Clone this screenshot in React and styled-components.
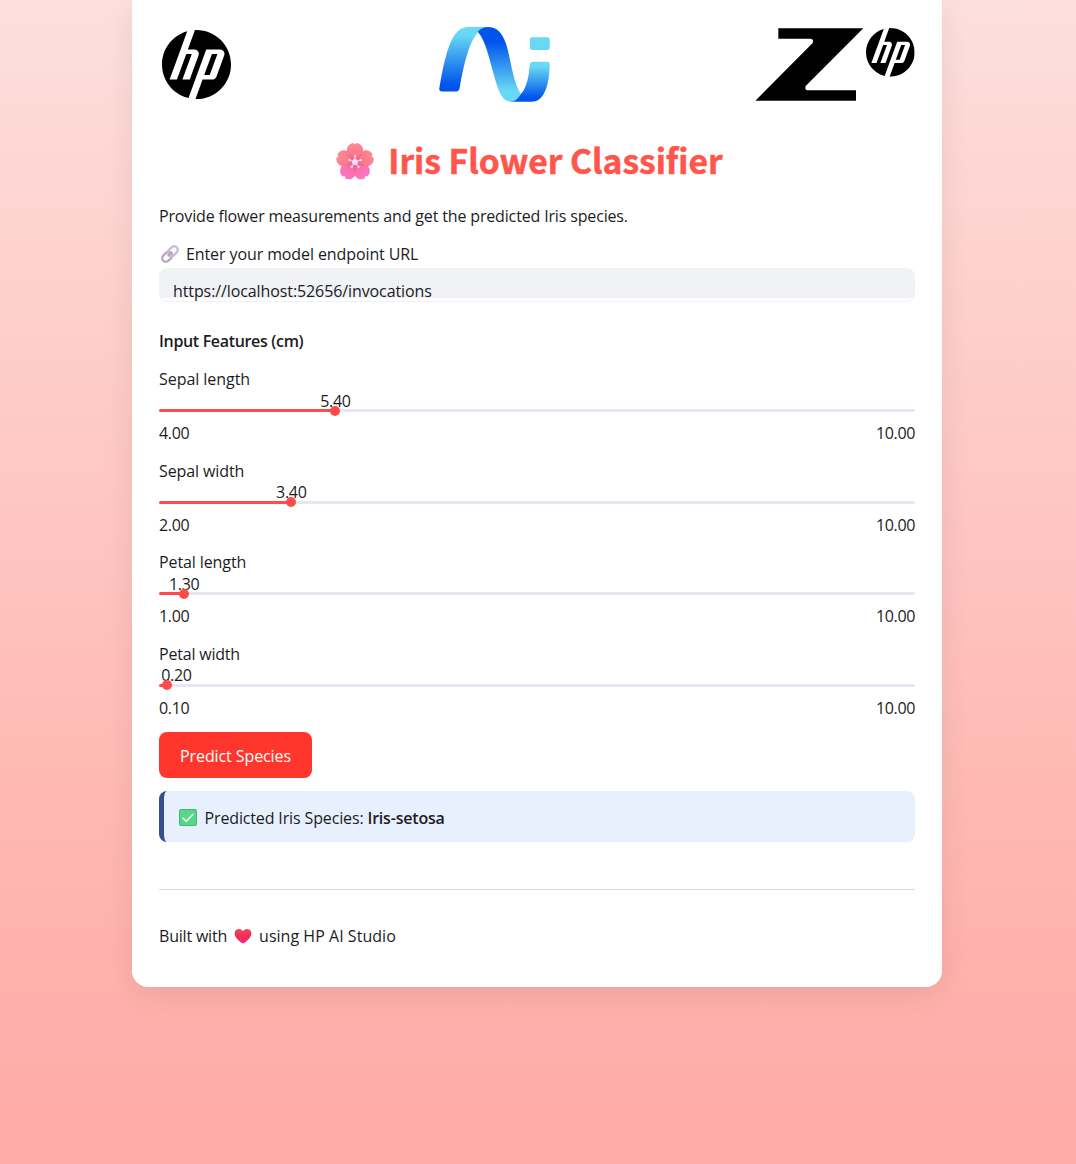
import React from "react";
import styled, { createGlobalStyle } from "styled-components";
import { SiHp } from "react-icons/si";

const GlobalStyle = createGlobalStyle`
  *, *::before, *::after { box-sizing: border-box; }
  html { height: 100%; }
  body {
    margin: 0;
    min-height: 1164px;
    background: linear-gradient(180deg, #fddfdc 0%, #fecdc9 31%, #ffb3ae 79%, #ffaaa5 100%);
    font-family: "Open Sans", "Noto Sans", sans-serif;
    font-size: 16px;
    line-height: 24px;
    color: #1c1c1f;
  }
`;

const Card = styled.main`
  width: 810px;
  height: 987px;
  margin: 0 0 0 132px;
  padding: 27px 27px 0;
  background: #fff;
  border-radius: 0 0 16px 16px;
  box-shadow: 0 8px 30px rgba(0, 0, 0, 0.08);
`;

const LogoRow = styled.header`
  display: flex;
  justify-content: space-between;
  align-items: center;
  height: 75px;
`;

const HpMark = styled.div`
  display: flex;
  width: 75px;
  height: 75px;
  padding: 3px;
  color: #000;
`;

const Title = styled.h1`
  display: flex;
  align-items: center;
  justify-content: center;
  gap: 14px;
  height: 52px;
  margin: 34px 15px 0 0;
  font-family: "Noto Sans CJK SC", "Open Sans", sans-serif;
  font-size: 33.6px;
  line-height: 48px;
  font-weight: 700;
  color: #ff554b;
  -webkit-text-stroke: 0.5px #ff554b;
  white-space: nowrap;

  span { padding-bottom: 4px; }
  svg { margin-bottom: 2px; }
`;

const Line = styled.p`
  display: flex;
  align-items: center;
  height: 24px;
  margin: ${(p) => p.$top || 0}px 0 0;
  letter-spacing: ${(p) => p.$track || 0}px;
  font-weight: ${(p) => (p.$bold ? 600 : 400)};
  white-space: pre;

  svg { flex: none; }
`;

const Field = styled.div`
  height: 34px;
  margin-top: 2px;
  border: 1px solid #f0f2f6;
  border-radius: 8px;
  background: linear-gradient(#f0f2f6 29px, #fff 29px);
  overflow: hidden;
`;

const Input = styled.input`
  display: block;
  width: 100%;
  height: 34px;
  padding: 9px 13px 0;
  border: 0;
  outline: 0;
  background: transparent;
  color: inherit;
  font: inherit;
  line-height: 24px;
  letter-spacing: -0.1px;
`;

const Sliders = styled.section`
  display: grid;
  gap: 13.6px;
  margin-top: 14px;
`;

const SliderBox = styled.div`
  display: flex;
  flex-direction: column;
  height: 78px;
`;

const Track = styled.div`
  position: relative;
  height: 3px;
  margin: 18px 0 9px;
  border-radius: 2px;
  background: linear-gradient(to right, #ff4b4b ${(p) => p.$at}%, #e5e8f0 ${(p) => p.$at}%);
`;

const Thumb = styled.span`
  position: absolute;
  top: -3.4px;
  left: ${(p) => p.$at}%;
  width: 10px;
  height: 10px;
  margin-left: -5px;
  border-radius: 50%;
  background: #ff4b4b;
`;

const Value = styled.span`
  position: absolute;
  bottom: -0.6px;
  left: ${(p) => p.$at}%;
  transform: translateX(-50%);
  letter-spacing: -0.3px;
`;

const Range = styled.div`
  display: flex;
  justify-content: space-between;
  letter-spacing: -0.35px;
`;

const Button = styled.button`
  display: block;
  width: 153px;
  height: 46px;
  margin-top: 12.2px;
  padding: 2px 0 0;
  border: 0;
  border-radius: 8px;
  background: #ff362b;
  color: #fff;
  font: inherit;
  letter-spacing: -0.1px;
`;

const Result = styled.div`
  display: flex;
  align-items: center;
  height: 51px;
  margin-top: 13px;
  padding: 3px 15px 0;
  border-left: 5px solid #344f8e;
  border-radius: 8px;
  background: #e8effd;
  white-space: pre;
  letter-spacing: -0.14px;

  svg { margin-right: 7.5px; }
  strong { font-weight: 600; letter-spacing: -0.2px; }
`;

const Rule = styled.hr`
  height: 1px;
  margin: 47px 0 0;
  border: 0;
  background: #d3dcea;
`;

const FooterText = styled.span`
  letter-spacing: ${(p) => p.$track}px;
`;

function AiLogo() {
  return (
    <svg width="112" height="75" viewBox="42 36 336 226">
      <defs>
        <linearGradient id="rise" x1="0" y1="0" x2="0" y2="1">
          <stop offset="0.12" stopColor="#68d8f5" />
          <stop offset="0.9" stopColor="#0054ec" />
        </linearGradient>
        <linearGradient id="fall" x1="0" y1="0" x2="0" y2="1">
          <stop offset="0.2" stopColor="#0054ec" />
          <stop offset="0.85" stopColor="#68d8f5" />
        </linearGradient>
      </defs>
      <path fill="url(#rise)" d="M42 222C52 160 66 92 88 60Q104 36 130 36H188L160 50C134 80 119 131 103 222Q101 230 94 230H49Q41 230 42 222Z" />
      <path fill="url(#rise)" d="M314 154Q315 141 326 141H366Q375 141 375 151C373 204 362 261 320 261H256L288 238C306 218 312 185 314 154Z" />
      <path fill="url(#fall)" d="M158 50Q171 36 189 36C215 36 232 53 243 86C258 133 263 199 288 238Q276 261 256 261C225 257 216 212 204 171C191 125 181 75 158 50Z" />
      <rect x="315" y="67" width="60" height="38" rx="8" fill="#68d8f5" />
    </svg>
  );
}

function ZLogo() {
  return (
    <svg width="160" height="75" viewBox="30 36 480 225">
      <path d="M100 40H355L182 213Q178 226 190 226H333V257H31L203 84Q207 71 195 71H100Z" />
      <SiHp x="363" y="39" size={146} color="#000" />
    </svg>
  );
}

const PETAL = "M19 21C13.5 18 9.6 10 11.4 5.5Q13 1.5 17.4 1L19 2.6L20.6 1Q25 1.5 26.6 5.5C28.4 10 24.5 18 19 21Z";

function Blossom() {
  return (
    <svg width="38" height="38" viewBox="0 0 38 38">
      <defs>
        <linearGradient id="petal" x1="0" y1="0" x2="0" y2="1">
          <stop offset="0" stopColor="#ff8b90" />
          <stop offset="1" stopColor="#f7688a" />
        </linearGradient>
        <linearGradient id="petalLow" x1="0" y1="1" x2="0" y2="0">
          <stop offset="0" stopColor="#f76990" />
          <stop offset="1" stopColor="#fc78c8" />
        </linearGradient>
      </defs>
      <path fill="url(#petalLow)" d={PETAL} transform="rotate(144 19 20)" />
      <path fill="url(#petalLow)" d={PETAL} transform="rotate(216 19 20)" />
      <path fill="url(#petal)" d={PETAL} transform="rotate(72 19 20)" />
      <path fill="url(#petal)" d={PETAL} transform="rotate(288 19 20)" />
      <path fill="url(#petal)" d={PETAL} />
      <g stroke="#e85278" strokeWidth="1" opacity="0.5">
        <path d="M19 20L13.5 12.5M19 20L24.5 12.5M19 20L10 23M19 20L28 23M19 20V29" />
      </g>
      <g stroke="#eedcff" fill="#eedcff" strokeLinecap="round">
        <path d="M19 20V14M19 20L13.3 18M19 20L24.7 18M19 20L15.5 25M19 20L22.5 25" />
        <circle cx="19" cy="20" r="2.6" />
        <circle cx="19" cy="14" r="0.7" />
        <circle cx="13.3" cy="18" r="0.7" />
        <circle cx="24.7" cy="18" r="0.7" />
        <circle cx="15.5" cy="25" r="0.7" />
        <circle cx="22.5" cy="25" r="0.7" />
      </g>
    </svg>
  );
}

function LinkIcon() {
  return (
    <svg width="27" height="18" viewBox="0 0 27 18" fill="none">
      <g transform="rotate(-45 11 9)" strokeWidth="2.4">
        <rect x="1.5" y="5.4" width="11" height="7.2" rx="3.6" stroke="#b9a8c4" />
        <rect x="9.5" y="5.4" width="11" height="7.2" rx="3.6" stroke="#cbbdd3" />
        <path d="M8 9H14" stroke="#ad9bba" strokeWidth="1.5" />
      </g>
    </svg>
  );
}

function CheckIcon() {
  return (
    <svg width="18" height="17" viewBox="0 0 18 17">
      <rect x="0.5" y="0.5" width="17" height="16" rx="1" fill="#55d688" stroke="#45b678" />
      <path d="M3.6 8.7L7.2 12.2L14.3 5" fill="none" stroke="#fff" strokeWidth="1.5" />
    </svg>
  );
}

const HeartSvg = styled.svg`
  margin: 1px 7px 0;
`;

function Heart() {
  return (
    <HeartSvg width="18" height="17" viewBox="0 0 18 17">
      <defs>
        <linearGradient id="heart" x1="0" y1="0" x2="0" y2="1">
          <stop offset="0" stopColor="#ef4a5c" />
          <stop offset="0.5" stopColor="#ee2c58" />
          <stop offset="1" stopColor="#fb2589" />
        </linearGradient>
      </defs>
      <path fill="url(#heart)" d="M9 3.2C7 0.2 2.5 0.4 1 3.4C-0.8 8 4 12.5 9 15.6C14 12.5 18.8 8 17 3.4C15.5 0.4 11 0.2 9 3.2Z" />
    </HeartSvg>
  );
}

const features = [
  { name: "Sepal length", min: 4, value: 5.4, track: -0.05 },
  { name: "Sepal width", min: 2, value: 3.4, track: -0.1 },
  { name: "Petal length", min: 1, value: 1.3, track: -0.1 },
  { name: "Petal width", min: 0.1, value: 0.2, track: -0.2 },
];

function Slider({ name, min, value, track, max = 10 }) {
  const at = ((value - min) / (max - min)) * 100;
  return (
    <SliderBox>
      <Line $track={track}>{name}</Line>
      <Track $at={at}>
        <Value $at={at < 1.2 ? 2.3 : at}>{value.toFixed(2)}</Value>
        <Thumb $at={at} />
      </Track>
      <Range>
        <span>{min.toFixed(2)}</span>
        <span>{max.toFixed(2)}</span>
      </Range>
    </SliderBox>
  );
}

export default function App() {
  return (
    <>
      <GlobalStyle />
      <Card>
        <LogoRow>
          <HpMark><SiHp size={69} /></HpMark>
          <AiLogo />
          <ZLogo />
        </LogoRow>
        <Title><Blossom /><span>Iris Flower Classifier</span></Title>
        <Line $top={16} $track={-0.155}>Provide flower measurements and get the predicted Iris species.</Line>
        <Line $top={14} $track={-0.1}><LinkIcon />Enter your model endpoint URL</Line>
        <Field><Input readOnly value="https://localhost:52656/invocations" /></Field>
        <Line $top={27} $bold $track={-0.33}>Input Features (cm)</Line>
        <Sliders>
          {features.map((f) => <Slider key={f.name} {...f} />)}
        </Sliders>
        <Button>Predict Species</Button>
        <Result><CheckIcon /><span>Predicted Iris Species: <strong>Iris-setosa</strong></span></Result>
        <Rule />
        <Line $top={34}>
          <FooterText $track={-0.2}>Built with</FooterText>
          <Heart />
          <FooterText $track={0.03}>using HP AI Studio</FooterText>
        </Line>
      </Card>
    </>
  );
}
